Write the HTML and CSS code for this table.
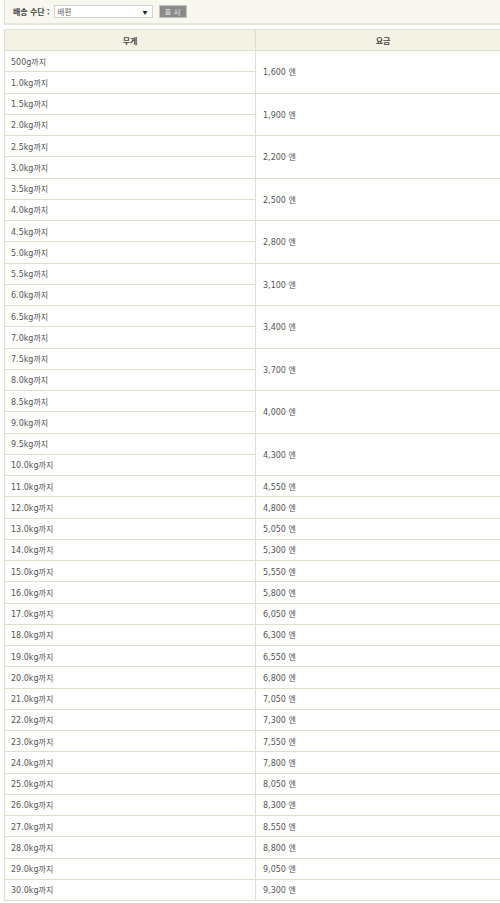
FILE: index.html
```html
<!DOCTYPE html>
<html lang="ko">
<head>
<meta charset="utf-8">
<link rel="stylesheet" href="styles.css">
</head>
<body>
<div class="page">
  <form class="filter">
    <label class="filter-label">배송 수단 :</label>
    <div class="select"><span>배편</span><span class="arrow">▼</span></div>
    <button type="button" class="btn">표 시</button>
  </form>
  <table class="rates">
    <colgroup><col class="col-weight"><col class="col-fee"></colgroup>
    <thead>
      <tr><th>무게</th><th>요금</th></tr>
    </thead>
    <tbody>
      <tr><td>500g까지</td><td rowspan="2">1,600 엔</td></tr>
      <tr><td>1.0kg까지</td></tr>
      <tr><td>1.5kg까지</td><td rowspan="2">1,900 엔</td></tr>
      <tr><td>2.0kg까지</td></tr>
      <tr><td>2.5kg까지</td><td rowspan="2">2,200 엔</td></tr>
      <tr><td>3.0kg까지</td></tr>
      <tr><td>3.5kg까지</td><td rowspan="2">2,500 엔</td></tr>
      <tr><td>4.0kg까지</td></tr>
      <tr><td>4.5kg까지</td><td rowspan="2">2,800 엔</td></tr>
      <tr><td>5.0kg까지</td></tr>
      <tr><td>5.5kg까지</td><td rowspan="2">3,100 엔</td></tr>
      <tr><td>6.0kg까지</td></tr>
      <tr><td>6.5kg까지</td><td rowspan="2">3,400 엔</td></tr>
      <tr><td>7.0kg까지</td></tr>
      <tr><td>7.5kg까지</td><td rowspan="2">3,700 엔</td></tr>
      <tr><td>8.0kg까지</td></tr>
      <tr><td>8.5kg까지</td><td rowspan="2">4,000 엔</td></tr>
      <tr><td>9.0kg까지</td></tr>
      <tr><td>9.5kg까지</td><td rowspan="2">4,300 엔</td></tr>
      <tr><td>10.0kg까지</td></tr>
      <tr><td>11.0kg까지</td><td>4,550 엔</td></tr>
      <tr><td>12.0kg까지</td><td>4,800 엔</td></tr>
      <tr><td>13.0kg까지</td><td>5,050 엔</td></tr>
      <tr><td>14.0kg까지</td><td>5,300 엔</td></tr>
      <tr><td>15.0kg까지</td><td>5,550 엔</td></tr>
      <tr><td>16.0kg까지</td><td>5,800 엔</td></tr>
      <tr><td>17.0kg까지</td><td>6,050 엔</td></tr>
      <tr><td>18.0kg까지</td><td>6,300 엔</td></tr>
      <tr><td>19.0kg까지</td><td>6,550 엔</td></tr>
      <tr><td>20.0kg까지</td><td>6,800 엔</td></tr>
      <tr><td>21.0kg까지</td><td>7,050 엔</td></tr>
      <tr><td>22.0kg까지</td><td>7,300 엔</td></tr>
      <tr><td>23.0kg까지</td><td>7,550 엔</td></tr>
      <tr><td>24.0kg까지</td><td>7,800 엔</td></tr>
      <tr><td>25.0kg까지</td><td>8,050 엔</td></tr>
      <tr><td>26.0kg까지</td><td>8,300 엔</td></tr>
      <tr><td>27.0kg까지</td><td>8,550 엔</td></tr>
      <tr><td>28.0kg까지</td><td>8,800 엔</td></tr>
      <tr><td>29.0kg까지</td><td>9,050 엔</td></tr>
      <tr><td>30.0kg까지</td><td>9,300 엔</td></tr>
    </tbody>
  </table>
</div>
</body>
</html>
```
FILE: styles.css
```css
html, body {
  margin: 0;
  padding: 0;
  background: #ffffff;
}
body {
  font-family: "DejaVu Sans", "Noto Sans CJK KR", sans-serif;
  font-size: 8px;
  color: #555;
  overflow: hidden;
}
.page {
  width: 506px;
  padding-left: 4px;
}
.filter {
  display: flex;
  align-items: center;
  margin: 0;
  padding-left: 8px;
  background: #f8f7f0;
  border-left: 1px solid #e2e1d6;
  border-bottom: 2px solid #e6e5dc;
  box-sizing: border-box;
  height: 25px;
}
.filter-label {
  font-family: "Noto Sans CJK KR", sans-serif;
  font-weight: bold;
  font-size: 8px;
  color: #444;
  margin-right: 4px;
}
.select {
  display: flex;
  align-items: center;
  justify-content: space-between;
  width: 99px;
  height: 13px;
  box-sizing: border-box;
  background: #fff;
  border: 1px solid #d4d4d4;
  padding: 0 4px 0 3px;
  font-family: "Noto Sans CJK KR", sans-serif;
  font-size: 7.5px;
  color: #666;
  margin-right: 6px;
}
.select .arrow {
  font-size: 5px;
  color: #222;
}
.btn {
  width: 28px;
  height: 13px;
  padding: 0;
  border: 1px solid #c4c4c4;
  background: #8a8a8a;
  color: #ececec;
  font-family: "Noto Sans CJK KR", sans-serif;
  font-size: 7.5px;
  line-height: 11px;
}
.rates {
  margin-top: 4px;
  width: 506px;
  border-collapse: collapse;
  table-layout: fixed;
}
.col-weight { width: 251px; }
.col-fee { width: 255px; }
.rates th, .rates td {
  border: 1px solid #e0dfcd;
  padding: 0 0 0 6px;
  text-align: left;
  vertical-align: middle;
}
.rates th {
  height: 20px;
  background: #f3f2e5;
  text-align: center;
  font-family: "Noto Sans CJK KR", sans-serif;
  font-weight: bold;
  font-size: 8px;
  color: #444;
  padding: 0;
}
.rates td {
  height: 20.25px;
  color: #555;
}
.rates td:nth-child(2), .rates td[rowspan] {
  padding-left: 7px;
}
```
